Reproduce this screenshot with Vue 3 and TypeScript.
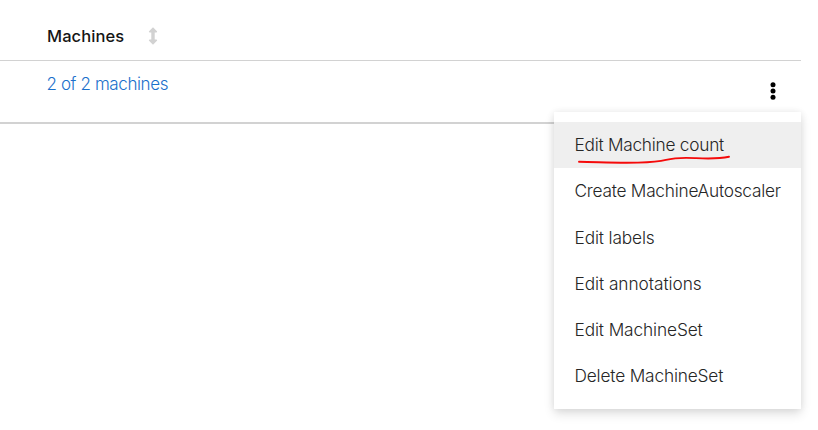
<script setup lang="ts">
interface Action {
  label: string
  tracking: string
}

const actions: Action[] = [
  { label: 'Edit Machine count', tracking: '-0.26px' },
  { label: 'Create MachineAutoscaler', tracking: '-0.25px' },
  { label: 'Edit labels', tracking: '-0.14px' },
  { label: 'Edit annotations', tracking: '-0.06px' },
  { label: 'Edit MachineSet', tracking: '-0.12px' },
  { label: 'Delete MachineSet', tracking: '-0.17px' },
]
</script>

<template>
  <main class="page">
    <section class="table">
      <header class="head">
        <span class="title">Machines</span>
        <svg class="sort" width="10" height="18" viewBox="0 0 10 18">
          <path d="M5 .3 9.2 4.6 8.6 5.4H6.7v7.2h1.9l.6.8L5 17.7.8 13.4l.6-.8h1.9V5.4H1.4L.8 4.6z" />
        </svg>
      </header>
      <div class="row">
        <a class="link">2 of 2 machines</a>
        <button class="kebab" aria-label="Actions">
          <svg width="6" height="18" viewBox="0 0 6 18">
            <circle cx="3" cy="2.7" r="2.5" />
            <circle cx="3" cy="9" r="2.5" />
            <circle cx="3" cy="15.3" r="2.5" />
          </svg>
        </button>
      </div>
    </section>
    <ul class="menu">
      <li v-for="(action, i) in actions" :key="action.label" class="item" :class="{ active: i === 0 }">
        <span :style="{ letterSpacing: action.tracking }">{{ action.label }}</span>
        <svg v-if="i === 0" class="mark" width="156" height="12" viewBox="0 0 156 12">
          <path d="M3 7.8C22 8 40 9.2 62 8.6c13-.3 20-.6 28-2.7 8-2 18-2.4 29-1.8 12 .6 22 1.2 34-1.3" />
        </svg>
      </li>
    </ul>
  </main>
</template>

<style>
body {
  background: #fff;
}
</style>

<style scoped>
.page {
  position: relative;
  height: 430px;
  overflow: hidden;
  font-family: Inter, "Liberation Sans", sans-serif;
  color: #151515;
}
.table {
  width: 801px;
}
.head {
  box-sizing: border-box;
  display: flex;
  align-items: center;
  gap: 24px;
  height: 61px;
  padding: 11px 0 0 47px;
  border-bottom: 1px solid #d2d2d2;
}
.title {
  font-size: 16.5px;
  font-weight: 500;
  letter-spacing: 0.08px;
}
.sort {
  fill: #d2d2d2;
}
.row {
  box-sizing: border-box;
  display: flex;
  justify-content: space-between;
  align-items: flex-start;
  height: 63px;
  padding: 13px 25px 0 46.5px;
  border-bottom: 2px solid #d2d2d2;
}
.link {
  font-size: 17px;
  font-weight: 350;
  line-height: 20px;
  letter-spacing: -0.39px;
  color: #1a70cb;
}
.kebab {
  display: flex;
  margin-top: 8px;
  padding: 0;
  border: 0;
  background: none;
}
.menu {
  position: absolute;
  top: 112px;
  left: 554px;
  box-sizing: border-box;
  width: 247px;
  margin: 0;
  padding: 10px 0;
  list-style: none;
  background: #fff;
  box-shadow: 0 5px 10px rgba(3, 3, 3, 0.12), 0 0 7px rgba(3, 3, 3, 0.08);
}
.item {
  position: relative;
  box-sizing: border-box;
  display: flex;
  align-items: center;
  height: 46.2px;
  padding: 0 0 0.6px 20.5px;
  font-size: 17.3px;
  font-weight: 300;
  color: #262626;
  white-space: nowrap;
}
.active {
  background: #efefef;
}
.mark {
  position: absolute;
  left: 22px;
  top: 32px;
  fill: none;
  stroke: #f50a0a;
  stroke-width: 1.9;
  stroke-linecap: round;
}
</style>
